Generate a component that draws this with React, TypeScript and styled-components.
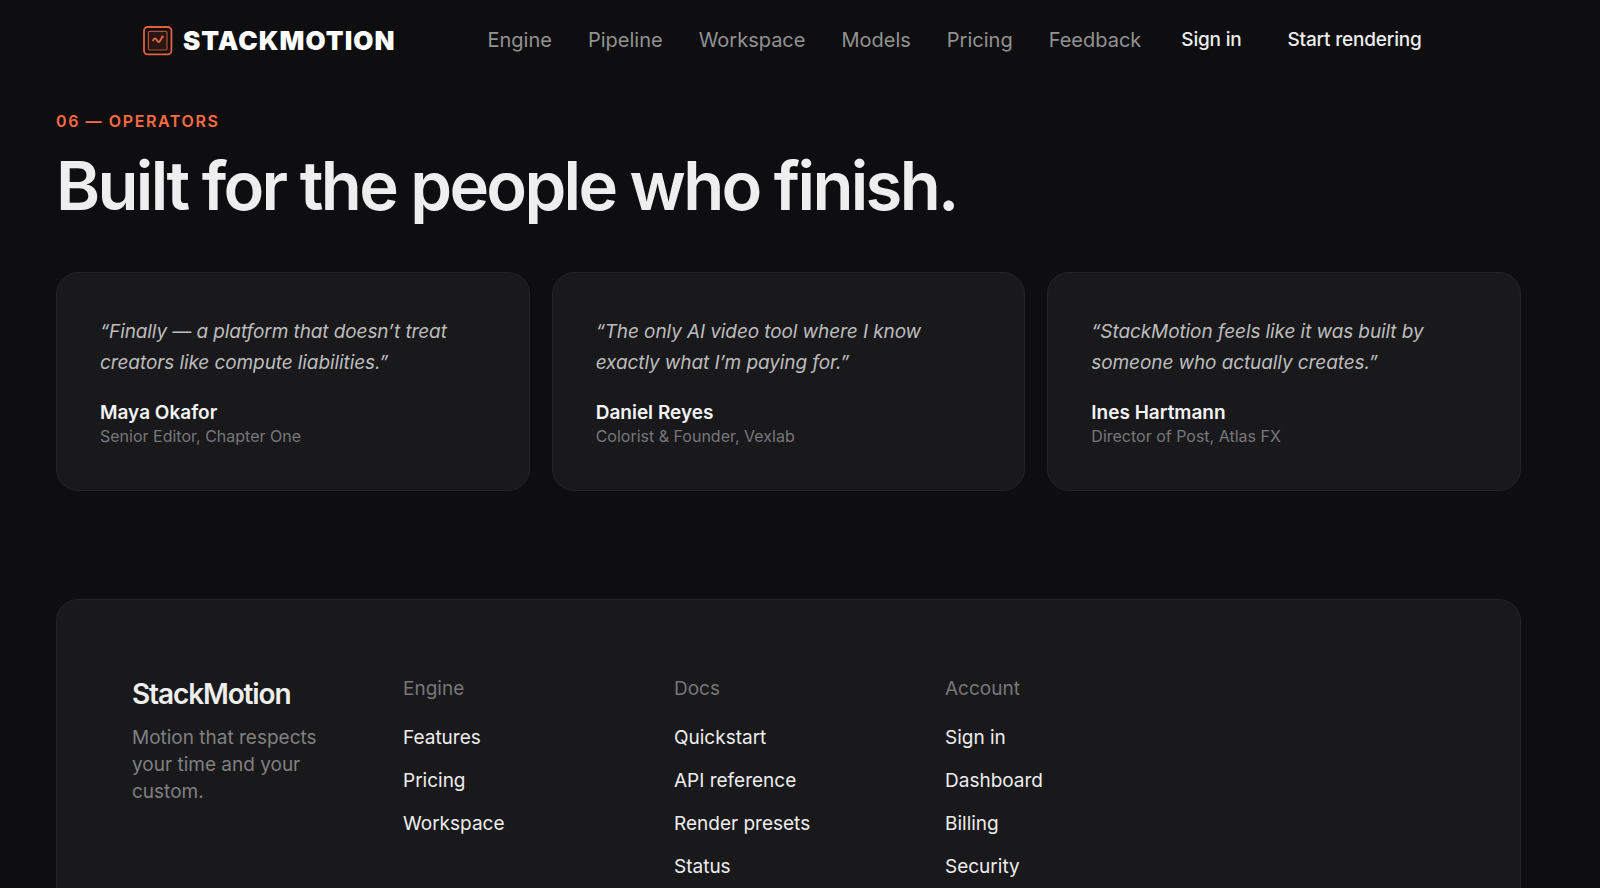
import React from "react";
import styled, { createGlobalStyle } from "styled-components";

const GlobalStyle = createGlobalStyle`
  *, *::before, *::after { box-sizing: border-box; }
  html { background: #0e0e10; }
  body {
    margin: 0;
    background: #0e0e10;
    color: #eeeeee;
    font-family: Inter, "Liberation Sans", sans-serif;
    font-size: 20px;
    height: 100vh;
    overflow: hidden;
  }
  h1, h2, h3, p, ul, blockquote, figure { margin: 0; padding: 0; }
  ul { list-style: none; }
  a { color: inherit; text-decoration: none; }
`;

const Header = styled.header`
  display: flex;
  align-items: center;
  height: 81px;
  padding: 0 143px;
`;

const Brand = styled.a`
  display: flex;
  align-items: center;
  gap: 10px;
  margin-right: 92px;
`;

const Wordmark = styled.span`
  color: #ffffff;
  font-size: 26px;
  font-weight: 900;
  line-height: 32px;
  letter-spacing: 0.04em;
`;

const Nav = styled.nav`
  display: flex;
  gap: 36px;
  margin-right: 17px;
`;

const NavLink = styled.a`
  padding-bottom: 2px;
  color: #929292;
  font-size: 20px;
  line-height: 28px;
`;

const NavButton = styled.button`
  padding: 0 23px 2px;
  border: 0;
  background: transparent;
  color: #eeeeee;
  font: 500 19px/28px Inter, "Liberation Sans", sans-serif;
  letter-spacing: -0.01em;
  white-space: nowrap;
  cursor: pointer;
`;

const Main = styled.main`
  padding: 29px 79px 0 56px;
`;

const Eyebrow = styled.p`
  color: #ff6b45;
  font-size: 16px;
  font-weight: 600;
  line-height: 22px;
  letter-spacing: 0.1em;
`;

const Title = styled.h2`
  margin-top: 17px;
  font-size: 67px;
  font-weight: 600;
  line-height: 74px;
  letter-spacing: -0.04em;
`;

const Cards = styled.div`
  display: grid;
  grid-template-columns: repeat(3, 1fr);
  gap: 22px;
  margin-top: 49px;
`;

const Card = styled.figure`
  padding: 43px 43px 42px;
  border: 1px solid #232325;
  border-radius: 22px;
  background: #19191b;
`;

const Quote = styled.blockquote`
  max-width: 360px;
  color: #bdbdbd;
  font-size: 19px;
  font-style: italic;
  line-height: 31px;
  letter-spacing: -0.005em;
`;

const Author = styled.figcaption`
  display: flex;
  flex-direction: column;
  margin-top: 22px;
`;

const AuthorName = styled.strong`
  color: #f4f4f4;
  font-size: 19px;
  font-weight: 600;
  line-height: 25px;
`;

const AuthorRole = styled.span`
  color: #77777a;
  font-size: 16px;
  line-height: 23px;
`;

const Footer = styled.footer`
  display: grid;
  grid-template-columns: repeat(5, 1fr);
  gap: 42px;
  margin-top: 108px;
  padding: 75px;
  border: 1px solid #232325;
  border-radius: 22px;
  background: #19191b;
`;

const FooterBrand = styled.h3`
  font-size: 28px;
  font-weight: 600;
  line-height: 39px;
  letter-spacing: -0.04em;
`;

const Tagline = styled.p`
  max-width: 220px;
  margin-top: 10px;
  color: #808082;
  font-size: 19px;
  line-height: 27px;
`;

const GroupTitle = styled.h3`
  color: #77777a;
  font-size: 19px;
  font-weight: 400;
  line-height: 27px;
`;

const LinkList = styled.ul`
  display: flex;
  flex-direction: column;
  gap: 16px;
  margin-top: 22px;
`;

const FooterLink = styled.a`
  display: block;
  color: #eeeeee;
  font-size: 19px;
  line-height: 27px;
`;

const Logo = () => (
  <svg width="30" height="30" viewBox="0 0 30 30" fill="none" aria-hidden="true">
    <rect x="1" y="1" width="27.4" height="27.4" rx="3.6" stroke="#e2603f" strokeWidth="1.8" />
    <rect x="5.4" y="5.4" width="18.6" height="18.6" rx="1.2" fill="#2a1714" stroke="#b44f36" strokeWidth="1.2" />
    <path d="M10 14.4q1.6-3.2 3-1.2l2 2.4q1 1 1.8-.4l2-3.6" stroke="#f0693f" strokeWidth="1.8" strokeLinecap="round" strokeLinejoin="round" />
    <circle cx="19.4" cy="11" r="1.4" fill="#d9603d" />
  </svg>
);

const navItems = ["Engine", "Pipeline", "Workspace", "Models", "Pricing", "Feedback"];

const testimonials = [
  {
    quote: "“Finally — a platform that doesn’t treat creators like compute liabilities.”",
    name: "Maya Okafor",
    role: "Senior Editor, Chapter One",
  },
  {
    quote: "“The only AI video tool where I know exactly what I’m paying for.”",
    name: "Daniel Reyes",
    role: "Colorist & Founder, Vexlab",
  },
  {
    quote: "“StackMotion feels like it was built by someone who actually creates.”",
    name: "Ines Hartmann",
    role: "Director of Post, Atlas FX",
  },
];

const footerGroups = [
  { title: "Engine", links: ["Features", "Pricing", "Workspace"] },
  { title: "Docs", links: ["Quickstart", "API reference", "Render presets", "Status"] },
  { title: "Account", links: ["Sign in", "Dashboard", "Billing", "Security"] },
];

export default function App() {
  return (
    <>
      <GlobalStyle />
      <Header>
        <Brand href="#">
          <Logo />
          <Wordmark>STACKMOTION</Wordmark>
        </Brand>
        <Nav>
          {navItems.map((item) => (
            <NavLink key={item} href="#">{item}</NavLink>
          ))}
        </Nav>
        <NavButton type="button">Sign in</NavButton>
        <NavButton type="button">Start rendering</NavButton>
      </Header>
      <Main>
        <Eyebrow>06 — OPERATORS</Eyebrow>
        <Title>Built for the people who finish.</Title>
        <Cards>
          {testimonials.map((t) => (
            <Card key={t.name}>
              <Quote>{t.quote}</Quote>
              <Author>
                <AuthorName>{t.name}</AuthorName>
                <AuthorRole>{t.role}</AuthorRole>
              </Author>
            </Card>
          ))}
        </Cards>
        <Footer>
          <div>
            <FooterBrand>StackMotion</FooterBrand>
            <Tagline>Motion that respects your time and your custom.</Tagline>
          </div>
          {footerGroups.map((group) => (
            <div key={group.title}>
              <GroupTitle>{group.title}</GroupTitle>
              <LinkList>
                {group.links.map((link) => (
                  <li key={link}>
                    <FooterLink href="#">{link}</FooterLink>
                  </li>
                ))}
              </LinkList>
            </div>
          ))}
        </Footer>
      </Main>
    </>
  );
}
